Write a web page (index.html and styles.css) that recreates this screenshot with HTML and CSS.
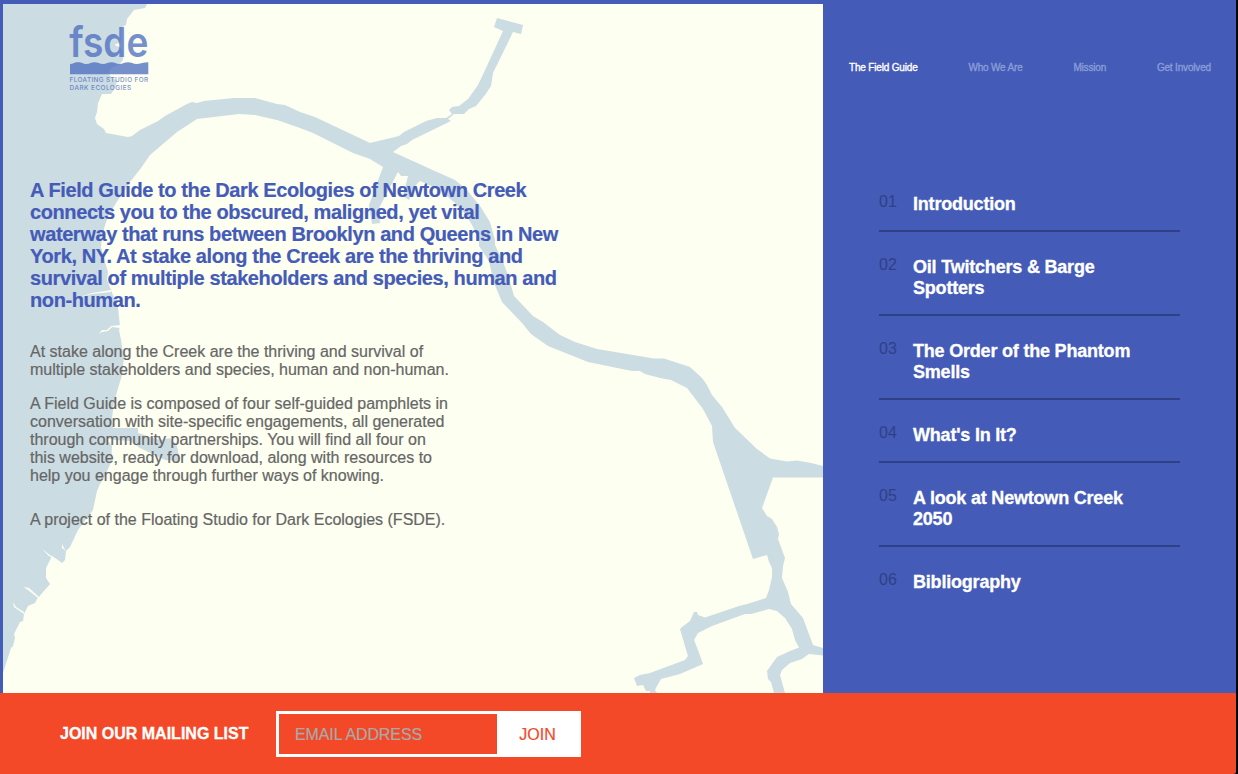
FILE: index.html
```
<!DOCTYPE html>
<html lang="en">
<head>
<meta charset="utf-8">
<title>A Field Guide to the Dark Ecologies of Newtown Creek</title>
<link rel="stylesheet" href="styles.css">
</head>
<body>
<div class="page">
  <div class="content">
    <main class="intro">
      <svg class="map" viewBox="3 4 820 689" aria-hidden="true">
        <path class="water" d="M3 4H147L145 8L134 10L127 19L126 25L122 27L121 43L115 44L116 46L120 47L123 52L123 60L119 65L111 68L109 72L110 76L117 81L115 88L111 94L102 94L98 103L97 112L95 118L97 124L104 129L106 133L128 137L132 136L140 130L158 121L165 116L187 104L192 102L197 103L204 101L234 98L255 98L277 104L285 105L300 112L315 117L370 143L399 136L404 132L426 121L437 118H446L452 114L449 110L452 107L459 106L468 99L478 85L486 68L503 31L494 27L497 18L523 25L521 34L513 32L493 73L491 86L485 95L476 106L469 109L464 114H454L448 119L451 121L412 140L407 144L401 146L393 152L437 172L455 180L466 189L480 206L490 222L495 240V245L503 262L508 275L514 296L533 316L543 322L560 335L575 342L597 349L654 358.5H664L690 367L702 378L707 385L712 395L722 407L735 428L757 449L770 458.5L787 461.5L797 460.5L811 463L823 466V477.5L773 477.5L762 508L767 516L772 519L777 527L779 534L778 539L785 558L783 566L782 578L788 592L791 604L803 618L813 645L823 648V655.5L809 654L802 659L790 663L782 670L780 675L785 693H774L771 682L768 679L767 671L777 657L790 651L799 647.5L795 640L792 629L785 618L777 611L769 609L751 614H745L712 626L698 633L694 640L698 650L703 664L680 674L661 679L657 686L655 690L657 693H650V691H646L643 685L637 686L634 678L640 675L650 673L685 660L688 656L687 653L680 629L682 627L690 621L694 612H697L698 615L705 617.5L739 606L747 604L766 598L769 590L772 577V568L769 562L767 555L753 559L713 442L712 426L703 409L687 388L671 380L660 378L645 374L640 371H632L588 362L548 346L531 334L522 323L502 302L494 283L489 261L479 246V240L472 225L466 215L455 203L440 190L420 181L414 187L409 200L403 196L408 176H401L398 172L379 208L380 223L372 224L369 205L383 167L370 159L353 153L313 133L300 128L277 120L255 115L239 114L197 119L177 132L150 155L141 168L130 182L118 200L108 216L102 235L101 247L105 262L108 272L107 280L111 290L118 308L120 326L119 330L121 340L124 358L122 375L119 385L114 402L112 418L113 428H138V433L160 440L170 438L177 446L180 461L165 460L140 448L130 441L115 440L106 438L112 446L111 462L104 478L100 484L97 491L93 510L78 530L70 547L66 551L65 560L62 563L52 556L46 568L46 578L50 584L37 599L35 603L28 606L24 614L23 621L20 622L14 634L15 638L13 646L11 648L3 673Z"/>
        <path class="land" d="M111 290L111 292L92 294L80 297L92 293ZM120 325V328L112 327L108 331L102 332L99 334L102 330L107 330L111 326ZM42 549L50 555L62 563L59 562L49 556ZM62 544L64 548L66 551L62 548ZM23 587L29 588L39 597L38 598L28 590ZM13 602L16 607L24 612V614L14 607Z"/>
      </svg>
      <svg class="logo" viewBox="0 0 80 68" role="img" aria-label="fsde">
        <text class="logo-name" x="0.300" y="31.700" textLength="79" lengthAdjust="spacingAndGlyphs">fsde</text>
        <path class="logo-fill" d="M1 39.200C4 39.200 5 37.300 9 37.300S14 39 17.500 39S22 37.300 25.500 37.300S30.500 39 34 39S39 37.300 42.500 37.300S47 39 50.500 39S55.500 37.300 59 37.300S64 39 67.500 39S75 37.300 79.300 37.300V49.200H1Z"/>
        <text class="logo-text" x="0.600" y="57.200" textLength="78.500">FLOATING STUDIO FOR</text>
        <text class="logo-text" x="0.600" y="65.300" textLength="61.500">DARK ECOLOGIES</text>
      </svg>
      <div class="copy">
        <h1>A Field Guide to the Dark Ecologies of Newtown Creek<br>connects you to the obscured, maligned, yet vital<br>waterway that runs between Brooklyn and Queens in New<br>York, NY. At stake along the Creek are the thriving and<br>survival of multiple stakeholders and species, human and<br>non-human.</h1>
        <p>At stake along the Creek are the thriving and survival of<br>multiple stakeholders and species, human and non-human.</p>
        <p>A Field Guide is composed of four self-guided pamphlets in<br>conversation with site-specific engagements, all generated<br>through community partnerships. You will find all four on<br>this website, ready for download, along with resources to<br>help you engage through further ways of knowing.</p>
        <p class="credit">A project of the Floating Studio for Dark Ecologies (FSDE).</p>
      </div>
    </main>
    <aside class="sidebar">
      <nav class="nav">
        <a class="active">The Field Guide</a>
        <a>Who We Are</a>
        <a>Mission</a>
        <a>Get Involved</a>
      </nav>
      <ol class="chapters">
        <li><span class="num">01</span><span class="title">Introduction</span></li>
        <li><span class="num">02</span><span class="title">Oil Twitchers &amp; Barge<br>Spotters</span></li>
        <li><span class="num">03</span><span class="title">The Order of the Phantom<br>Smells</span></li>
        <li><span class="num">04</span><span class="title">What's In It?</span></li>
        <li><span class="num">05</span><span class="title">A look at Newtown Creek<br>2050</span></li>
        <li><span class="num">06</span><span class="title">Bibliography</span></li>
      </ol>
    </aside>
  </div>
  <form class="signup">
    <label for="email">JOIN OUR MAILING LIST</label>
    <div class="field">
      <input id="email" type="email" placeholder="EMAIL ADDRESS">
      <button type="button">JOIN</button>
    </div>
  </form>
</div>
</body>
</html>
```
FILE: styles.css
```
* { box-sizing: border-box; }
body {
  margin: 0;
  background: #000508;
  font-family: "Liberation Sans", Arial, sans-serif;
  overflow: hidden;
}
.page {
  width: 1236px;
  height: 774px;
  display: flex;
  flex-direction: column;
  background: #445bb7;
  border-bottom-right-radius: 3px;
  overflow: hidden;
}
.content {
  height: 693px;
  display: grid;
  grid-template-columns: 820px 1fr;
  padding: 4px 0 0 3px;
}
.intro {
  position: relative;
  background: #fdfff0;
  overflow: hidden;
}
.map {
  position: absolute;
  inset: 0;
  width: 820px;
  height: 689px;
}
.water { fill: #ccdce3; }
.land { fill: #fdfff0; }
.logo {
  position: relative;
  display: block;
  width: 80px;
  height: 68px;
  margin: 21px 0 0 66px;
  opacity: .75;
  overflow: visible;
}
.logo-fill { fill: #4a6bbf; }
.logo-name {
  fill: #4a6bbf;
  font: 600 41px "Inter", "Liberation Sans", sans-serif;
}
.logo-text {
  fill: #4a6bbf;
  font: 500 6.4px "Inter", "Liberation Sans", sans-serif;
}
.copy {
  position: relative;
  width: 560px;
  padding: 86px 0 0 27px;
}
h1 {
  margin: 0 0 32px;
  color: #445bb7;
  font-size: 20px;
  line-height: 22px;
  font-weight: bold;
  letter-spacing: -.4px;
  white-space: nowrap;
  -webkit-text-stroke: .2px currentColor;
}
p {
  margin: 0 0 16px;
  color: #666;
  font-size: 16px;
  line-height: 18px;
  white-space: nowrap;
  -webkit-text-stroke: .2px currentColor;
}
.credit { margin-top: 26px; }
.nav {
  display: flex;
  justify-content: space-between;
  padding: 57px 25px 0 26px;
  font-size: 10px;
  line-height: 14px;
  color: #8a9dd8;
  letter-spacing: -.17px;
  -webkit-text-stroke: .35px currentColor;
}
.nav .active { color: #fff; }
.chapters {
  list-style: none;
  width: 301px;
  margin: 96px 0 0 56px;
  padding: 0;
}
.chapters li {
  display: flex;
  padding: 22px 0 16px;
  border-bottom: 2px solid #2f4186;
  line-height: 21px;
}
.chapters li + li { padding-top: 24px; }
.chapters li:last-child { border-bottom: 0; }
.num {
  width: 34px;
  color: #2f4186;
  font-size: 16px;
  line-height: 17px;
}
.title {
  margin: 1px 0 -1px;
  color: #fff;
  font-size: 18px;
  font-weight: bold;
  letter-spacing: -.2px;
  white-space: nowrap;
  -webkit-text-stroke: .3px currentColor;
}
.signup {
  height: 81px;
  display: flex;
  align-items: center;
  padding: 0 0 0 60px;
  background: #f34928;
}
.signup label {
  width: 216px;
  color: #fff;
  font-size: 16px;
  font-weight: bold;
  white-space: nowrap;
  -webkit-text-stroke: .3px currentColor;
}
.field {
  display: flex;
  width: 305px;
  height: 46px;
  border: 3px solid #fff;
}
.field input {
  width: 218px;
  padding: 2px 16px 0;
  border: 0;
  border-radius: 0;
  background: transparent;
  font: 16px "Liberation Sans", Arial, sans-serif;
  letter-spacing: -.1px;
}
.field input::placeholder {
  color: #a9a9a9;
  -webkit-text-stroke: .2px currentColor;
}
.field button {
  flex: 1;
  padding: 2px 0 0;
  border: 0;
  background: #fff;
  color: #f34928;
  font: 16px "Liberation Sans", Arial, sans-serif;
  -webkit-text-stroke: .2px currentColor;
}
```
